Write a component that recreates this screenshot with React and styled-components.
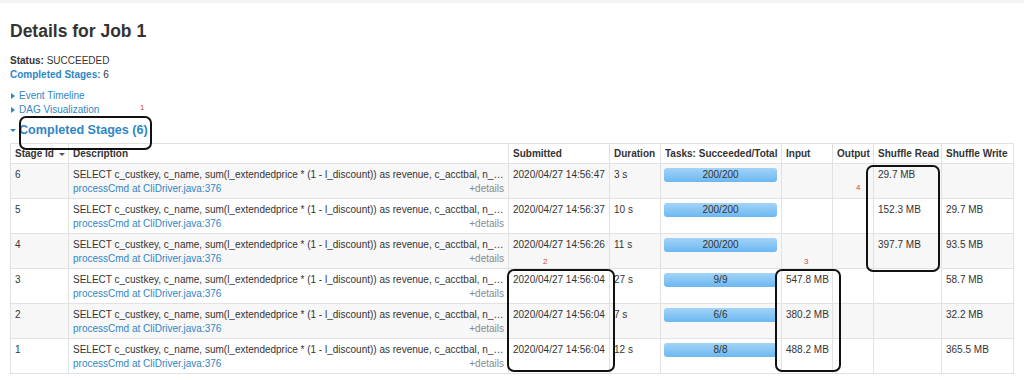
import React from "react";
import styled, { createGlobalStyle } from "styled-components";

const GlobalStyle = createGlobalStyle`
  html, body {
    margin: 0;
    padding: 0;
    background: #fff;
  }
  body {
    font-family: "Liberation Sans", Arial, Helvetica, sans-serif;
    font-size: 10px;
    color: #333;
  }
`;

const Page = styled.div`
  position: relative;
  width: 1024px;
  height: 380px;
  overflow: hidden;
  padding: 0 10px;
  box-sizing: border-box;
  border-top: 3px solid #f4f4f4;
`;

const Title = styled.h3`
  margin: 18px 0 0;
  font-size: 17.5px;
  line-height: 20px;
  font-weight: bold;
  color: #333;
`;

const Summary = styled.ul`
  list-style: none;
  margin: 13px 0 0;
  padding: 0;
  line-height: 14px;
`;

const Link = styled.span`
  color: #2f86c6;
`;

const Label = styled.strong`
  color: ${(p) => (p.$link ? "#2f86c6" : "#333")};
`;

const Toggles = styled.div`
  margin-top: 7px;
  display: flex;
  flex-direction: column;
  line-height: 14px;
`;

const Toggle = styled.span`
  display: flex;
  align-items: center;
  gap: 4px;
  color: #2f86c6;
  padding-left: 1px;
`;

const Arrow = styled.span`
  display: inline-block;
  width: 0;
  height: 0;
  border-style: solid;
  ${(p) =>
    p.$open
      ? `border-width: ${p.$size}px ${p.$size}px 0 ${p.$size}px; border-color: #2f86c6 transparent transparent transparent;`
      : `border-width: ${p.$size}px 0 ${p.$size}px ${p.$size + 1}px; border-color: transparent transparent transparent #2f86c6;`}
`;

const Section = styled.h4`
  margin: 3px 0 3px;
  display: flex;
  align-items: center;
  gap: 3px;
  font-size: 12.6px;
  line-height: 20px;
  font-weight: bold;
  color: #2f86c6;
`;

const Table = styled.table`
  width: 1003px;
  table-layout: fixed;
  border-collapse: collapse;
  border: 1px solid #e2e2e2;
  font-size: 10px;
  line-height: 14px;
`;

const Th = styled.th`
  text-align: left;
  font-weight: bold;
  padding: 3px 2px 2px 4px;
  border: 1px solid #e2e2e2;
  white-space: nowrap;
  color: #333;
`;

const Row = styled.tr`
  background: ${(p) => (p.$striped ? "#f7f7f7" : "#fff")};
`;

const Td = styled.td`
  vertical-align: top;
  padding: 4px 2px 2px 4px;
  height: 28px;
  border: 1px solid #e2e2e2;
  white-space: nowrap;
`;

const DescLine = styled.div`
  white-space: nowrap;
`;

const DescFoot = styled.div`
  display: flex;
  justify-content: space-between;
  padding-right: 2px;
`;

const Details = styled.span`
  color: #8a8a8a;
`;

const SortCaret = styled.span`
  display: inline-block;
  margin-left: 5px;
  vertical-align: middle;
  border-style: solid;
  border-width: 3px 3px 0 3px;
  border-color: #555 transparent transparent transparent;
`;

const Bar = styled.div`
  height: 14px;
  border-radius: 3px;
  background: linear-gradient(to bottom, #a3d3f8 0%, #6cb8f1 100%);
  color: #333;
  text-align: center;
  line-height: 14px;
  margin-left: -1px;
  margin-right: 2px;
`;

const Callout = styled.div`
  position: absolute;
  border: 2px solid #111;
  border-radius: 7px;
  box-sizing: border-box;
`;

const Tag = styled.span`
  position: absolute;
  color: #e0443c;
  font-size: 8px;
  line-height: 8px;
`;

const cols = [58, 440, 101, 51, 121, 51, 41, 68, 72];

const query =
  "SELECT c_custkey, c_name, sum(l_extendedprice * (1 - l_discount)) as revenue, c_acctbal, n_…";

const stages = [
  { id: 6, sub: "2020/04/27 14:56:47", dur: "3 s", tasks: "200/200", input: "", output: "", read: "29.7 MB", write: "" },
  { id: 5, sub: "2020/04/27 14:56:37", dur: "10 s", tasks: "200/200", input: "", output: "", read: "152.3 MB", write: "29.7 MB" },
  { id: 4, sub: "2020/04/27 14:56:26", dur: "11 s", tasks: "200/200", input: "", output: "", read: "397.7 MB", write: "93.5 MB" },
  { id: 3, sub: "2020/04/27 14:56:04", dur: "27 s", tasks: "9/9", input: "547.8 MB", output: "", read: "", write: "58.7 MB" },
  { id: 2, sub: "2020/04/27 14:56:04", dur: "7 s", tasks: "6/6", input: "380.2 MB", output: "", read: "", write: "32.2 MB" },
  { id: 1, sub: "2020/04/27 14:56:04", dur: "12 s", tasks: "8/8", input: "488.2 MB", output: "", read: "", write: "365.5 MB" },
];

const callouts = [
  { box: { left: 19, top: 113, width: 133, height: 34 }, tag: { left: 140, top: 101 }, n: 1 },
  { box: { left: 507, top: 266, width: 108, height: 103 }, tag: { left: 543, top: 255 }, n: 2 },
  { box: { left: 775, top: 266, width: 66, height: 103 }, tag: { left: 804, top: 255 }, n: 3 },
  { box: { left: 866, top: 162, width: 74, height: 107 }, tag: { left: 856, top: 181 }, n: 4 },
];

export default function App() {
  return (
    <>
      <GlobalStyle />
      <Page>
        <Title>Details for Job 1</Title>
        <Summary>
          <li>
            <Label>Status:</Label> SUCCEEDED
          </li>
          <li>
            <Label $link>Completed Stages:</Label> 6
          </li>
        </Summary>
        <Toggles>
          <Toggle>
            <Arrow $size={3} />
            Event Timeline
          </Toggle>
          <Toggle>
            <Arrow $size={3} />
            DAG Visualization
          </Toggle>
        </Toggles>
        <Section>
          <Arrow $open $size={3} />
          Completed Stages (6)
        </Section>
        <Table>
          <colgroup>
            {cols.map((w, i) => (
              <col key={i} style={{ width: w }} />
            ))}
          </colgroup>
          <thead>
            <tr>
              <Th>
                Stage Id
                <SortCaret />
              </Th>
              <Th>Description</Th>
              <Th>Submitted</Th>
              <Th>Duration</Th>
              <Th>Tasks: Succeeded/Total</Th>
              <Th>Input</Th>
              <Th>Output</Th>
              <Th>Shuffle Read</Th>
              <Th>Shuffle Write</Th>
            </tr>
          </thead>
          <tbody>
            {stages.map((s, i) => (
              <Row key={s.id} $striped={i % 2 === 0}>
                <Td>{s.id}</Td>
                <Td>
                  <DescLine>{query}</DescLine>
                  <DescFoot>
                    <Link>processCmd at CliDriver.java:376</Link>
                    <Details>+details</Details>
                  </DescFoot>
                </Td>
                <Td>{s.sub}</Td>
                <Td>{s.dur}</Td>
                <Td>
                  <Bar>{s.tasks}</Bar>
                </Td>
                <Td>{s.input}</Td>
                <Td>{s.output}</Td>
                <Td>{s.read}</Td>
                <Td>{s.write}</Td>
              </Row>
            ))}
          </tbody>
        </Table>
        {callouts.map((c) => (
          <React.Fragment key={c.n}>
            <Callout style={c.box} />
            <Tag style={c.tag}>{c.n}</Tag>
          </React.Fragment>
        ))}
      </Page>
    </>
  );
}
